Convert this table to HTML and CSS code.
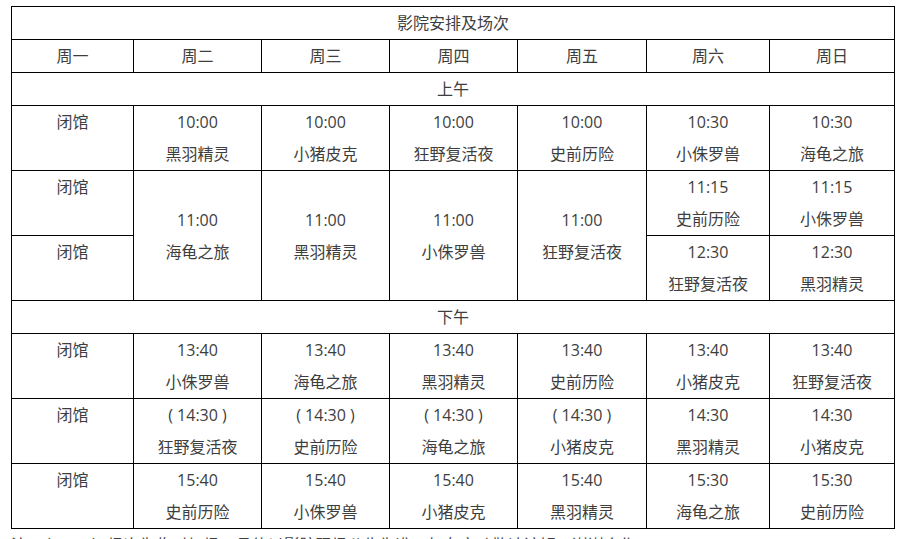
FILE: index.html
```html
<!DOCTYPE html>
<html lang="zh-CN">
<head>
<meta charset="utf-8">
<title>影院安排及场次</title>
<link rel="stylesheet" href="styles.css">
</head>
<body>
<div class="page">
<table class="schedule">
  <colgroup>
    <col class="c1"><col class="c2"><col class="c3"><col class="c4"><col class="c5"><col class="c6"><col class="c7">
  </colgroup>
  <tr><td colspan="7">影院安排及场次</td></tr>
  <tr><td>周一</td><td>周二</td><td>周三</td><td>周四</td><td>周五</td><td>周六</td><td>周日</td></tr>
  <tr><td colspan="7">上午</td></tr>
  <tr class="two">
    <td>闭馆</td>
    <td>10:00<br>黑羽精灵</td>
    <td>10:00<br>小猪皮克</td>
    <td>10:00<br>狂野复活夜</td>
    <td>10:00<br>史前历险</td>
    <td>10:30<br>小侏罗兽</td>
    <td>10:30<br>海龟之旅</td>
  </tr>
  <tr class="two">
    <td>闭馆</td>
    <td rowspan="2" class="mid">11:00<br>海龟之旅</td>
    <td rowspan="2" class="mid">11:00<br>黑羽精灵</td>
    <td rowspan="2" class="mid">11:00<br>小侏罗兽</td>
    <td rowspan="2" class="mid">11:00<br>狂野复活夜</td>
    <td>11:15<br>史前历险</td>
    <td>11:15<br>小侏罗兽</td>
  </tr>
  <tr class="two">
    <td>闭馆</td>
    <td>12:30<br>狂野复活夜</td>
    <td>12:30<br>黑羽精灵</td>
  </tr>
  <tr><td colspan="7">下午</td></tr>
  <tr class="two">
    <td>闭馆</td>
    <td>13:40<br>小侏罗兽</td>
    <td>13:40<br>海龟之旅</td>
    <td>13:40<br>黑羽精灵</td>
    <td>13:40<br>史前历险</td>
    <td>13:40<br>小猪皮克</td>
    <td>13:40<br>狂野复活夜</td>
  </tr>
  <tr class="two">
    <td>闭馆</td>
    <td>( 14:30 )<br>狂野复活夜</td>
    <td>( 14:30 )<br>史前历险</td>
    <td>( 14:30 )<br>海龟之旅</td>
    <td>( 14:30 )<br>小猪皮克</td>
    <td>14:30<br>黑羽精灵</td>
    <td>14:30<br>小猪皮克</td>
  </tr>
  <tr class="two">
    <td>闭馆</td>
    <td>15:40<br>史前历险</td>
    <td>15:40<br>小侏罗兽</td>
    <td>15:40<br>小猪皮克</td>
    <td>15:40<br>黑羽精灵</td>
    <td>15:30<br>海龟之旅</td>
    <td>15:30<br>史前历险</td>
  </tr>
</table>
<p class="note">注：（14:30）场次为临时加场，具体以影院现场公告为准，如有变动敬请谅解，谢谢合作。</p>
</div>
</body>
</html>
```
FILE: styles.css
```css
html, body {
  margin: 0;
  padding: 0;
  background: #ffffff;
}
.page {
  padding: 6px 0 0 11px;
  font-family: "Open Sans", "Noto Sans CJK SC", sans-serif;
  font-size: 16px;
  color: #3e3e3e;
}
.schedule {
  border-collapse: collapse;
  table-layout: fixed;
  width: 883px;
}
.c1 { width: 122px; }
.c2 { width: 128px; }
.c3 { width: 128px; }
.c4 { width: 128px; }
.c5 { width: 129px; }
.c6 { width: 123px; }
.c7 { width: 125px; }
.schedule td {
  border: 1px solid #000;
  padding: 0;
  height: 32px;
  line-height: 32px;
  text-align: center;
  vertical-align: top;
  white-space: pre;
}
.schedule tr.two td {
  height: 64px;
}
.schedule td.mid {
  vertical-align: middle;
}
.note {
  margin: 4px 0 0 0;
  line-height: 24px;
  color: #3e3e3e;
}
```
